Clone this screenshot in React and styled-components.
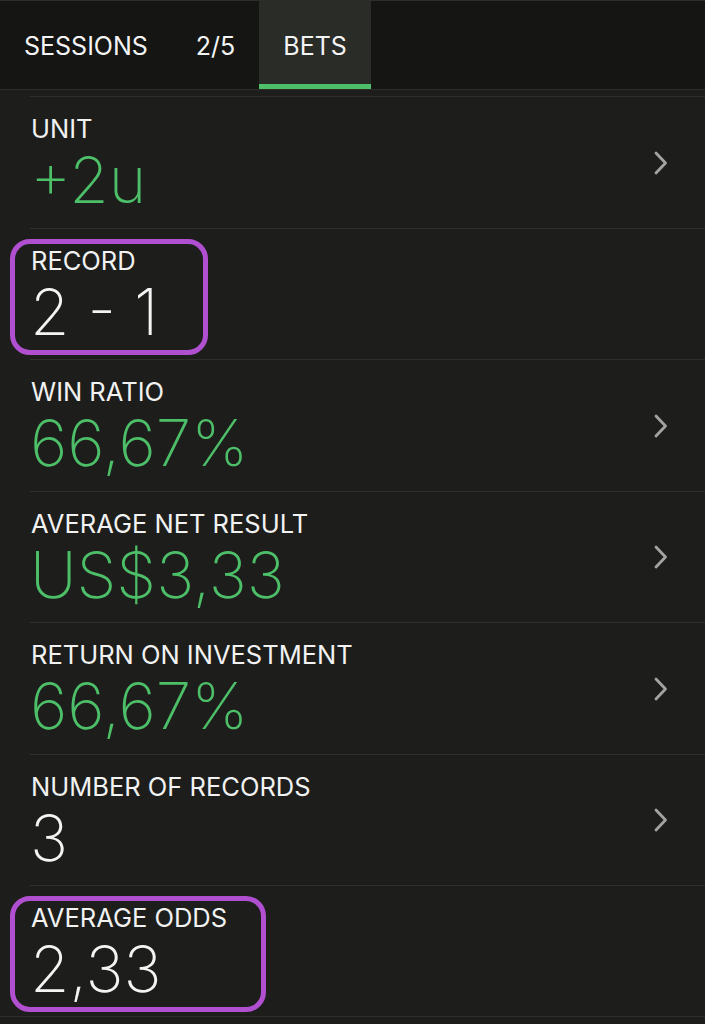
import React from "react";
import styled, { createGlobalStyle } from "styled-components";

const Global = createGlobalStyle`
  html, body { margin: 0; padding: 0; background: #1d1e1c; }
  body { font-family: Inter, "Noto Sans", "Liberation Sans", sans-serif; -webkit-font-smoothing: antialiased; }
`;

const Screen = styled.div`
  width: 705px;
  height: 1024px;
  overflow: hidden;
  background: #1d1e1c;
  display: flex;
  flex-direction: column;
`;

const TabBar = styled.div`
  display: flex;
  flex-shrink: 0;
  height: 90px;
  background: #151614;
  border-top: 1px solid #2c2e2b;
  border-bottom: 1px solid #2a2d29;
  box-sizing: border-box;
`;

const Tab = styled.div`
  display: flex;
  align-items: center;
  padding: 6px 24px 0;
  font-size: 25px;
  font-weight: 400;
  color: #f4f4f4;
  letter-spacing: 0;
  background: ${(p) => (p.$active ? "#2a2c28" : "transparent")};
  border-bottom: 5px solid ${(p) => (p.$active ? "#4fc06a" : "transparent")};
`;

const List = styled.div`
  padding-top: 6px;
  display: flex;
  flex-direction: column;
`;

const Row = styled.div`
  position: relative;
  display: flex;
  align-items: stretch;
  height: 131.5px;
  flex-shrink: 0;
  box-sizing: border-box;
  padding: 0 36px 0 31px;
  &::before {
    content: "";
    position: absolute;
    top: 0;
    left: 30px;
    right: 0;
    height: 1px;
    background: #2d302c;
  }
  &:last-child::after {
    content: "";
    position: absolute;
    bottom: 0;
    left: 0;
    right: 0;
    height: 1px;
    background: #2d302c;
  }
`;

const Content = styled.div`
  flex: 1;
  display: flex;
  align-items: flex-start;
  padding-top: 18px;
`;

const Block = styled.div`
  position: relative;
  display: flex;
  flex-direction: column;
  &::before {
    content: "";
    display: ${(p) => (p.$box ? "block" : "none")};
    position: absolute;
    top: -7px;
    bottom: -10px;
    left: -21px;
    width: ${(p) => p.$box || 0}px;
    border: 5px solid #b14fd1;
    border-radius: 20px;
    box-sizing: border-box;
  }
`;

const Label = styled.div`
  font-size: 25.5px;
  line-height: 30px;
  font-weight: 400;
  color: #f2f2f2;
  letter-spacing: 0;
  white-space: nowrap;
`;

const Value = styled.div`
  margin-top: 3px;
  font-size: 64px;
  line-height: 66px;
  font-weight: 200;
  color: ${(p) => (p.$green ? "#4dbf68" : "#f4f4f4")};
  margin-left: -1px;
  white-space: pre;
`;

const ChevronWrap = styled.div`
  align-self: center;
  display: flex;
  margin-top: 2px;
`;

const Chevron = () => (
  <ChevronWrap>
    <svg width="16" height="26" viewBox="0 0 16 26">
      <path d="M3 3 L12.5 13 L3 23" fill="none" stroke="#a3a3a3" strokeWidth="2.8" strokeLinecap="round" strokeLinejoin="round" />
    </svg>
  </ChevronWrap>
);

const rows = [
  { label: "UNIT", value: "+2u", green: true, chevron: true },
  { label: "RECORD", value: "2 - 1", box: 198 },
  { label: "WIN RATIO", value: "66,67%", green: true, chevron: true },
  { label: "AVERAGE NET RESULT", value: "US$3,33", green: true, chevron: true },
  { label: "RETURN ON INVESTMENT", value: "66,67%", green: true, chevron: true },
  { label: "NUMBER OF RECORDS", value: "3", chevron: true },
  { label: "AVERAGE ODDS", value: "2,33", box: 256 },
];

export default function App() {
  return (
    <Screen>
      <Global />
      <TabBar>
        <Tab>SESSIONS</Tab>
        <Tab>2/5</Tab>
        <Tab $active>BETS</Tab>
      </TabBar>
      <List>
        {rows.map((r) => (
          <Row key={r.label}>
            <Content>
              <Block $box={r.box}>
                <Label>{r.label}</Label>
                <Value $green={r.green}>{r.value}</Value>
              </Block>
            </Content>
            {r.chevron && <Chevron />}
          </Row>
        ))}
      </List>
    </Screen>
  );
}
